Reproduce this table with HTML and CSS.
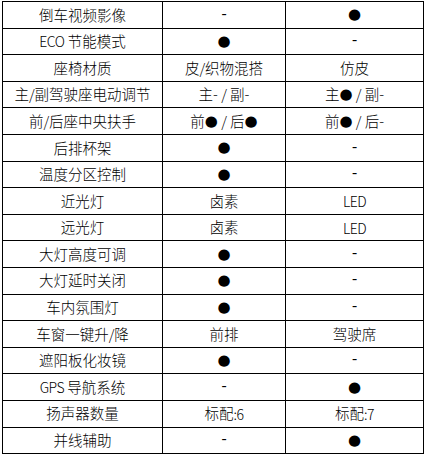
FILE: index.html
```html
<!DOCTYPE html>
<html lang="zh">
<head>
<meta charset="utf-8">
<link rel="stylesheet" href="styles.css">
</head>
<body>
<div class="spec">
  <div class="c">倒车视频影像</div><div class="c"><span class="na">-</span></div><div class="c"><span class="dot">●</span></div>
  <div class="c"><span class="lat">ECO</span> 节能模式</div><div class="c"><span class="dot">●</span></div><div class="c"><span class="na">-</span></div>
  <div class="c">座椅材质</div><div class="c">皮/织物混搭</div><div class="c">仿皮</div>
  <div class="c">主/副驾驶座电动调节</div><div class="c">主- / 副-</div><div class="c">主<span class="dot">●</span> / 副-</div>
  <div class="c">前/后座中央扶手</div><div class="c">前<span class="dot">●</span> / 后<span class="dot">●</span></div><div class="c">前<span class="dot">●</span> / 后-</div>
  <div class="c">后排杯架</div><div class="c"><span class="dot">●</span></div><div class="c"><span class="na">-</span></div>
  <div class="c">温度分区控制</div><div class="c"><span class="dot">●</span></div><div class="c"><span class="na">-</span></div>
  <div class="c">近光灯</div><div class="c">卤素</div><div class="c"><span class="lat">LED</span></div>
  <div class="c">远光灯</div><div class="c">卤素</div><div class="c"><span class="lat">LED</span></div>
  <div class="c">大灯高度可调</div><div class="c"><span class="dot">●</span></div><div class="c"><span class="na">-</span></div>
  <div class="c">大灯延时关闭</div><div class="c"><span class="dot">●</span></div><div class="c"><span class="na">-</span></div>
  <div class="c">车内氛围灯</div><div class="c"><span class="dot">●</span></div><div class="c"><span class="na">-</span></div>
  <div class="c">车窗一键升/降</div><div class="c">前排</div><div class="c">驾驶席</div>
  <div class="c">遮阳板化妆镜</div><div class="c"><span class="dot">●</span></div><div class="c"><span class="na">-</span></div>
  <div class="c"><span class="lat">GPS</span> 导航系统</div><div class="c"><span class="na">-</span></div><div class="c"><span class="dot">●</span></div>
  <div class="c">扬声器数量</div><div class="c">标配<span class="lat">:6</span></div><div class="c">标配<span class="lat">:7</span></div>
  <div class="c">并线辅助</div><div class="c"><span class="na">-</span></div><div class="c"><span class="dot">●</span></div>
</div>
</body>
</html>
```

FILE: styles.css
```css
html, body {
  margin: 0;
  padding: 0;
  background: #ffffff;
}
body {
  padding: 1px 0 0 2px;
  font-family: "Noto Sans CJK SC", "Liberation Sans", sans-serif;
  font-size: 14.5px;
  font-weight: 300;
  color: #000;
}
.spec {
  display: grid;
  grid-template-columns: 159px 122px 137px;
  grid-auto-rows: 25.6px;
  gap: 1px;
  padding: 1px;
  background: #000;
  width: max-content;
}
.c {
  background: #fff;
  display: flex;
  align-items: center;
  justify-content: center;
  white-space: pre;
  line-height: 1;
}
.lat {
  font-family: "Noto Sans CJK SC", sans-serif;
  font-weight: 300;
  font-size: 14px;
  letter-spacing: -0.5px;
}
.na {
  font-family: "Liberation Mono", monospace;
  font-weight: 400;
}
.dot {
  font-family: "DejaVu Sans", sans-serif;
  font-weight: 400;
  font-size: 15px;
}
```
